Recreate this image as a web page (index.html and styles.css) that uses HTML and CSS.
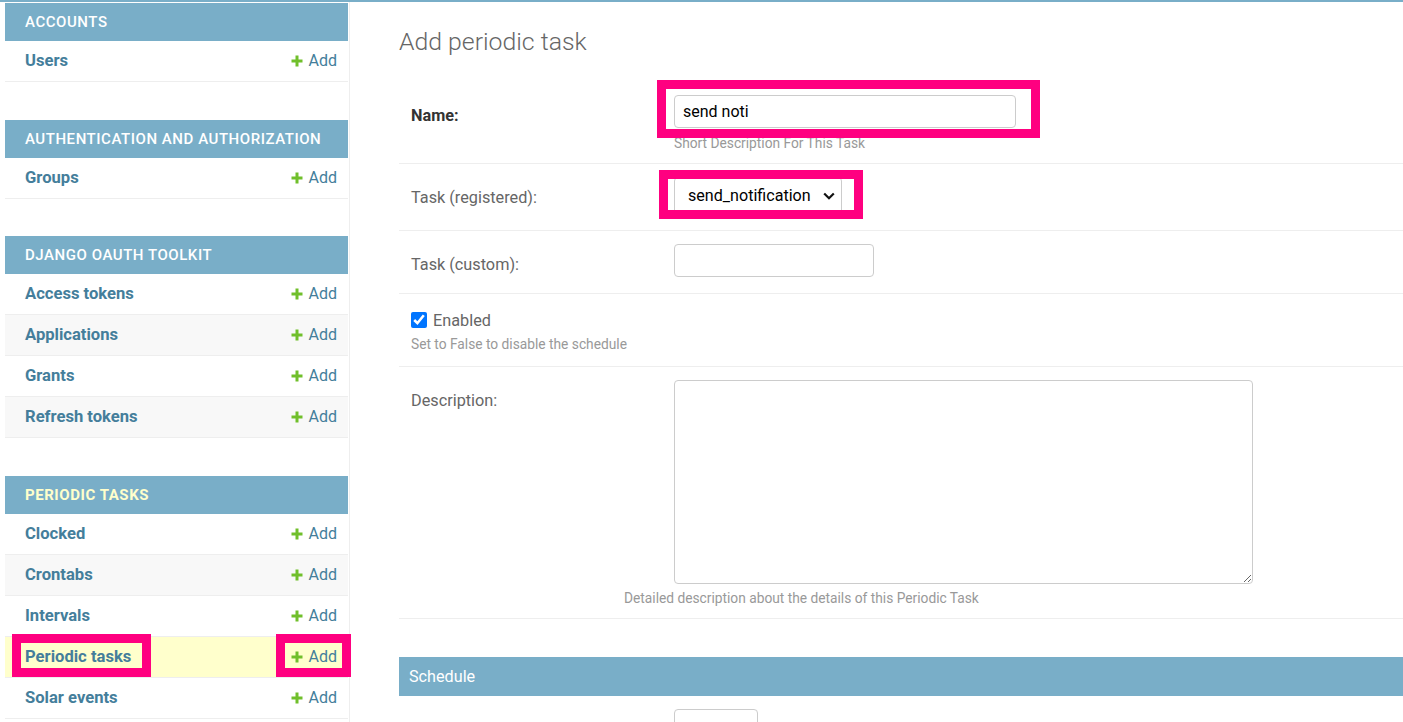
FILE: index.html
```html
<!DOCTYPE html>
<html lang="en">
<head>
    <meta charset="UTF-8">
    <title>Add periodic task | Django site admin</title>
    <link rel="stylesheet" href="styles.css">
</head>
<body>
    <div class="page">
        <nav class="sidebar">
            <div class="app">
                <div class="app-caption">Accounts</div>
                <div class="model-row"><a class="model-name">Users</a><a class="addlink"><svg width="12" height="12" viewBox="0 0 12 12"><path d="M6 0.5v11M0.5 6h11" stroke="#70bf2b" stroke-width="3"/></svg>Add</a></div>
            </div>

            <div class="app">
                <div class="app-caption">Authentication and Authorization</div>
                <div class="model-row"><a class="model-name">Groups</a><a class="addlink"><svg width="12" height="12" viewBox="0 0 12 12"><path d="M6 0.5v11M0.5 6h11" stroke="#70bf2b" stroke-width="3"/></svg>Add</a></div>
            </div>

            <div class="app">
                <div class="app-caption">Django OAuth Toolkit</div>
                <div class="model-row"><a class="model-name">Access tokens</a><a class="addlink"><svg width="12" height="12" viewBox="0 0 12 12"><path d="M6 0.5v11M0.5 6h11" stroke="#70bf2b" stroke-width="3"/></svg>Add</a></div>
                <div class="model-row alt"><a class="model-name">Applications</a><a class="addlink"><svg width="12" height="12" viewBox="0 0 12 12"><path d="M6 0.5v11M0.5 6h11" stroke="#70bf2b" stroke-width="3"/></svg>Add</a></div>
                <div class="model-row"><a class="model-name">Grants</a><a class="addlink"><svg width="12" height="12" viewBox="0 0 12 12"><path d="M6 0.5v11M0.5 6h11" stroke="#70bf2b" stroke-width="3"/></svg>Add</a></div>
                <div class="model-row alt"><a class="model-name">Refresh tokens</a><a class="addlink"><svg width="12" height="12" viewBox="0 0 12 12"><path d="M6 0.5v11M0.5 6h11" stroke="#70bf2b" stroke-width="3"/></svg>Add</a></div>
            </div>

            <div class="app">
                <div class="app-caption current">Periodic tasks</div>
                <div class="model-row"><a class="model-name">Clocked</a><a class="addlink"><svg width="12" height="12" viewBox="0 0 12 12"><path d="M6 0.5v11M0.5 6h11" stroke="#70bf2b" stroke-width="3"/></svg>Add</a></div>
                <div class="model-row alt"><a class="model-name">Crontabs</a><a class="addlink"><svg width="12" height="12" viewBox="0 0 12 12"><path d="M6 0.5v11M0.5 6h11" stroke="#70bf2b" stroke-width="3"/></svg>Add</a></div>
                <div class="model-row"><a class="model-name">Intervals</a><a class="addlink"><svg width="12" height="12" viewBox="0 0 12 12"><path d="M6 0.5v11M0.5 6h11" stroke="#70bf2b" stroke-width="3"/></svg>Add</a></div>
                <div class="model-row current">
                    <a class="model-name">Periodic tasks</a><a class="addlink"><svg width="12" height="12" viewBox="0 0 12 12"><path d="M6 0.5v11M0.5 6h11" stroke="#70bf2b" stroke-width="3"/></svg>Add</a>
                    <!-- annotation boxes from the screenshot -->
                    <span class="mark mark-model"></span>
                    <span class="mark mark-add"></span>
                </div>
                <div class="model-row"><a class="model-name">Solar events</a><a class="addlink"><svg width="12" height="12" viewBox="0 0 12 12"><path d="M6 0.5v11M0.5 6h11" stroke="#70bf2b" stroke-width="3"/></svg>Add</a></div>
            </div>
        </nav>

        <main class="content">
            <h1>Add periodic task</h1>

            <fieldset class="module">
                <div class="form-row with-help">
                    <div class="field">
                        <label class="required">Name:</label>
                        <div class="input-wrap">
                            <input class="input-name" type="text" value="send noti">
                            <span class="mark mark-name"></span>
                        </div>
                    </div>
                    <div class="help help-field">Short Description For This Task</div>
                </div>

                <div class="form-row">
                    <div class="field">
                        <label>Task (registered):</label>
                        <div class="input-wrap">
                            <div class="select">
                                <span>send_notification</span>
                                <svg width="12" height="8" viewBox="0 0 12 8"><path d="M1.2 1.5L6 6.2L10.8 1.5" fill="none" stroke="#111" stroke-width="2.2"/></svg>
                            </div>
                            <span class="mark mark-select"></span>
                        </div>
                    </div>
                </div>

                <div class="form-row">
                    <div class="field">
                        <label>Task (custom):</label>
                        <input class="input-task" type="text">
                    </div>
                </div>

                <div class="form-row checkbox-row">
                    <div class="check">
                        <input type="checkbox" checked>
                        <span>Enabled</span>
                    </div>
                    <div class="help">Set to False to disable the schedule</div>
                </div>

                <div class="form-row with-help">
                    <div class="field">
                        <label>Description:</label>
                        <textarea class="input-desc"></textarea>
                    </div>
                    <div class="help help-desc">Detailed description about the details of this Periodic Task</div>
                </div>
            </fieldset>

            <fieldset class="module">
                <h2>Schedule</h2>
                <div class="form-row">
                    <div class="field">
                        <label></label>
                        <input class="input-small" type="text">
                    </div>
                </div>
            </fieldset>
        </main>
    </div>
</body>
</html>
```

FILE: styles.css
```css
* {
    box-sizing: border-box;
}

body {
    margin: 0;
    font-family: Roboto, "Lucida Grande", "DejaVu Sans", sans-serif;
    color: #333;
    background-color: #fff;
    border-top: 2px solid #79aec8;
    overflow: hidden;
}

.page {
    display: flex;
    min-height: 720px;
}

/* Sidebar with app list */
.sidebar {
    flex-shrink: 0;
    width: 345px;
    margin-left: 5px;
    padding-top: 1px;
    padding-right: 1px;
    border-right: 1px solid #eee;
}

.app {
    margin-bottom: 37.5px;
}

.app-caption {
    background-color: #79aec8;
    color: #fff;
    padding: 9px 20px;
    font-size: 15px;
    line-height: 20px;
    font-weight: 500;
    letter-spacing: 0.55px;
    text-transform: uppercase;
}

.app-caption.current {
    color: #ffc;
    font-weight: 700;
}

.model-row {
    position: relative;
    display: flex;
    justify-content: space-between;
    align-items: center;
    padding: 10px 11px 10px 20px;
    line-height: 20px;
    font-size: 16px;
    border-bottom: 1px solid #eee;
}

.model-row.alt {
    background-color: #f8f8f8;
}

.model-row.current {
    background-color: #ffc;
}

.model-name {
    color: #447e9b;
    font-weight: 700;
    font-size: 16.6px;
}

.addlink {
    display: flex;
    align-items: center;
    gap: 6px;
    color: #447e9b;
}

/* Pink annotation boxes drawn over the screenshot */
.mark {
    position: absolute;
    border: 9px solid #ff0080;
    pointer-events: none;
}

.mark-model {
    left: 7px;
    top: -3px;
    width: 139px;
    height: 43px;
}

.mark-add {
    left: 271px;
    top: -3px;
    width: 75px;
    height: 43px;
}

.mark-name {
    left: -17px;
    top: -15px;
    right: -24px;
    bottom: -10px;
}

.mark-select {
    left: -15px;
    top: -7px;
    right: -21px;
    bottom: -5px;
}

/* Main content */
.content {
    flex: 1;
    padding-left: 49px;
}

h1 {
    margin: 0 0 25px;
    padding-top: 25px;
    font-size: 24.8px;
    line-height: 30px;
    font-weight: 300;
    color: #666;
}

.module {
    margin: 0 0 38px;
    padding: 0;
    border: none;
}

.module h2 {
    margin: 0;
    padding: 10px 10px 9px;
    background-color: #79aec8;
    color: #fff;
    font-size: 16.2px;
    line-height: 20px;
    font-weight: 400;
}

.form-row {
    padding: 13px 12px 16px;
    border-bottom: 1px solid #eee;
}

.form-row.with-help {
    padding-bottom: 11px;
}

.checkbox-row {
    padding-bottom: 13px;
}

.field {
    display: flex;
    align-items: flex-start;
}

.field label {
    width: 263px;
    flex-shrink: 0;
    padding-top: 9px;
    font-size: 16.25px;
    line-height: 24px;
    color: #666;
}

.field label.required {
    font-weight: 700;
    color: #333;
}

.input-wrap {
    position: relative;
}

input[type="text"],
textarea {
    display: block;
    height: 33px;
    border: 1px solid #ccc;
    border-radius: 4px;
    padding: 0 8px;
    font-family: Roboto, sans-serif;
    font-size: 16px;
    color: #000;
    background-color: #fff;
}

.input-name {
    width: 342px;
}

.input-task {
    width: 200px;
}

.input-small {
    width: 84px;
}

.input-desc {
    width: 579px;
    height: 204px;
    resize: both;
}

.select {
    display: flex;
    align-items: center;
    justify-content: space-between;
    width: 168px;
    height: 37px;
    padding: 0 6px 0 13px;
    border: 1px solid #ccc;
    border-radius: 4px;
    font-size: 16.1px;
    color: #000;
}

.check {
    display: flex;
    align-items: center;
    gap: 6px;
    height: 26px;
    font-size: 16.25px;
    color: #666;
}

.check input {
    width: 16px;
    height: 16px;
    margin: 0;
    accent-color: #0075ff;
}

.help {
    margin-top: 2px;
    font-size: 13.75px;
    line-height: 18px;
    color: #999;
}

.help-field {
    margin-top: 6px;
    padding-left: 263px;
}

.help-desc {
    margin-top: 5px;
    padding-left: 213px;
}
```
